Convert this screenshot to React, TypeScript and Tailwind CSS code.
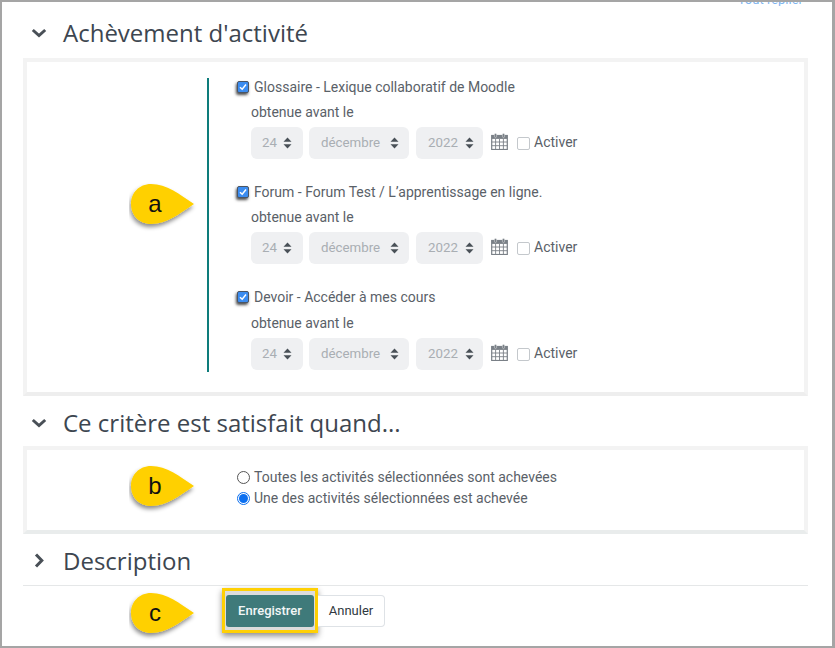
const Chevron = ({ open }: { open: boolean }) => (
  <svg width="16" height="16" viewBox="0 0 16 16" className="text-[#495057]">
    {open ? (
      <path d="M1.8 5 L8 10.6 L14.2 5" fill="none" stroke="currentColor" strokeWidth="3" />
    ) : (
      <path d="M5 1.5 L10.8 7.5 L5 13.5" fill="none" stroke="currentColor" strokeWidth="3" />
    )}
  </svg>
);

const Heading = ({ title, open = true }: { title: string; open?: boolean }) => (
  <div className="flex items-center h-[34px]">
    <div className="w-[40px] pl-[8px] flex items-center">
      <Chevron open={open} />
    </div>
    <h3 className="text-[24px] leading-[34px] text-[#3d4650] font-['Open_Sans',sans-serif]">{title}</h3>
  </div>
);

const Caret = () => (
  <svg width="9" height="12" viewBox="0 0 9 12" className="text-[#495057] shrink-0">
    <path d="M4.5 0.5 L8.5 4.8 L0.5 4.8 Z M4.5 11.5 L8.5 7.2 L0.5 7.2 Z" fill="currentColor" />
  </svg>
);

const Select = ({ value, w, gap, pad }: { value: string; w: string; gap: string; pad: string }) => (
  <div className={`h-[32px] ${w} ${gap} ${pad} rounded-[6px] bg-[#eff0f2] flex items-center text-[13.3px] text-[#a9aeb3]`}>
    <span>{value}</span>
  </div>
);

const Calendar = () => (
  <svg width="17" height="17" viewBox="0 0 17 17" className="text-[#7a8087] ml-[8px] mb-[3px] shrink-0">
    <rect x="0.7" y="2.5" width="15.6" height="14" fill="none" stroke="currentColor" strokeWidth="1.2" />
    <rect x="0.7" y="2.5" width="15.6" height="3.4" fill="currentColor" />
    <path d="M0.7 9h15.6M0.7 12.7h15.6M4.6 6v10.5M8.5 6v10.5M12.4 6v10.5" stroke="currentColor" strokeWidth="0.9" fill="none" />
    <rect x="3.4" y="0.4" width="2.2" height="4" rx="1" fill="currentColor" stroke="#fff" strokeWidth="0.4" />
    <rect x="11.4" y="0.4" width="2.2" height="4" rx="1" fill="currentColor" stroke="#fff" strokeWidth="0.4" />
  </svg>
);

const Checked = () => (
  <span className="w-[12px] h-[12px] rounded-[2px] bg-[#3b8cf0] border border-[#4b5563] shadow-[-1px_2px_3px_rgba(0,0,0,0.7)] flex items-center justify-center shrink-0">
    <svg width="8" height="8" viewBox="0 0 8 8">
      <path d="M1 4.2 L3.2 6.2 L7 1.6" fill="none" stroke="#fff" strokeWidth="1.5" />
    </svg>
  </span>
);

const DateRow = ({ label, className, subGap }: { label: string; className: string; subGap: string }) => (
  <div className={`font-['Roboto',sans-serif] ${className}`}>
    <div className="flex items-center h-[18px] gap-[5px] text-[14px] text-[#5a6168]">
      <Checked />
      <span>{label}</span>
    </div>
    <div className={`h-[18px] ${subGap} ml-[14px] text-[14px] leading-[18px] text-[#5a6168]`}>obtenue avant le</div>
    <div className="h-[32px] flex items-center mt-[6px] ml-[14px]">
      <div className="relative flex">
        <div className="relative">
          <Select value="24" w="w-[52px]" gap="mr-[6px]" pad="pl-[11px]" />
          <span className="absolute left-[32px] top-[10px]"><Caret /></span>
        </div>
        <div className="relative">
          <Select value="décembre" w="w-[100px]" gap="mr-[7px]" pad="pl-[12px]" />
          <span className="absolute left-[81px] top-[10px]"><Caret /></span>
        </div>
        <div className="relative">
          <Select value="2022" w="w-[67px]" gap="mr-0" pad="pl-[12px]" />
          <span className="absolute left-[49px] top-[10px]"><Caret /></span>
        </div>
      </div>
      <Calendar />
      <span className="ml-[9px] w-[13px] h-[13px] rounded-[2px] border border-[#c4c8cc] bg-white shrink-0" />
      <span className="ml-[4px] pb-[2px] text-[14px] text-[#5a6168]">Activer</span>
    </div>
  </div>
);

const Pill = ({ letter, className }: { letter: string; className: string }) => (
  <svg width="72" height="52" viewBox="0 0 72 52" className={`absolute ${className}`}>
    <defs>
      <filter id={`s${letter}`} x="-20%" y="-20%" width="140%" height="160%">
        <feDropShadow dx="-1" dy="3" stdDeviation="2" floodColor="#000" floodOpacity="0.45" />
      </filter>
    </defs>
    <path
      d="M22 2 C38 2 50 12 65 22 C50 32 38 42 22 42 C10 42 2 33 2 22 C2 11 10 2 22 2 Z"
      fill="#ffd004"
      filter={`url(#s${letter})`}
    />
    <text x="26" y="30" textAnchor="middle" fontSize="24" fontFamily="'Liberation Sans', sans-serif" fill="#111">
      {letter}
    </text>
  </svg>
);

export default function App() {
  return (
    <div className="relative w-[835px] h-[648px] overflow-hidden bg-white border-t-2 border-l-2 border-b-2 border-r-[3px] border-[#a5a5a5]">
      <div className="h-[4px] overflow-hidden flex justify-end items-end pr-[29px] text-[13px] leading-[13px] text-[#7fb6f0] font-['Roboto',sans-serif]">
        <span className="shrink-0">Tout replier</span>
      </div>
      <div className="pl-[21px] w-[806px]">
        <div className="mt-[10px]">
          <Heading title="Achèvement d'activité" />
        </div>
        <div className="relative mt-[8px] h-[338px] border-4 border-[#f3f3f3] border-b-[#eeeeee] flex">
          <div className="w-[180px] shrink-0" />
          <div className="mt-[16px] h-[294px] border-l-2 border-[#0e7c7b] pl-[28px]">
            <DateRow label="Glossaire - Lexique collaboratif de Moodle" className="" subGap="mt-[7px]" />
            <DateRow label="Forum - Forum Test / L’apprentissage en ligne." className="mt-[24px]" subGap="mt-[7px]" />
            <DateRow label="Devoir - Accéder à mes cours" className="mt-[24px]" subGap="mt-[8px]" />
          </div>
          <Pill letter="a" className="left-[102px] top-[120px]" />
        </div>
        <div className="mt-[10px]">
          <Heading title="Ce critère est satisfait quand..." />
        </div>
        <div className="relative mt-[6px] h-[88px] border-4 border-[#f3f3f3] border-b-[#e9ecec] pl-[210px] pt-[16px] font-['Roboto',sans-serif] text-[14px] text-[#5a6168]">
          <div className="flex items-center h-[22px] gap-[4px]">
            <span className="w-[13px] h-[13px] rounded-full border border-[#555] bg-white shrink-0" />
            <span>Toutes les activités sélectionnées sont achevées</span>
          </div>
          <div className="flex items-center h-[21px] gap-[4px]">
            <span className="w-[13px] h-[13px] rounded-full border border-[#0b6ff0] bg-white flex items-center justify-center shrink-0">
              <span className="w-[9px] h-[9px] rounded-full bg-[#0b6ff0]" />
            </span>
            <span>Une des activités sélectionnées est achevée</span>
          </div>
          <Pill letter="b" className="left-[102px] top-[14px]" />
        </div>
        <div className="mt-[10px] h-[42px] border-b border-[#e5e7e8]">
          <Heading title="Description" open={false} />
        </div>
        <div className="relative pl-[199px] pt-[2px] flex items-start font-['Roboto',sans-serif] text-[13px]">
          <div className="border-[3px] border-[#ffd004] pt-[4px] pb-[3px] px-[1px] bg-[#dcdcdc] shadow-[0_3px_6px_rgba(0,0,0,0.45)]">
            <div className="w-[88px] h-[32px] rounded-[3px] bg-[#3f7a7a] text-[#f2f7f7] flex items-center justify-center font-medium">Enregistrer</div>
          </div>
          <div className="mt-[7px] w-[67px] h-[32px] rounded-r-[4px] border border-[#dee2e6] border-l-0 bg-white text-[#2f3940] flex items-center justify-center">Annuler</div>
          <Pill letter="c" className="left-[106px] top-[5px]" />
        </div>
      </div>
    </div>
  );
}
